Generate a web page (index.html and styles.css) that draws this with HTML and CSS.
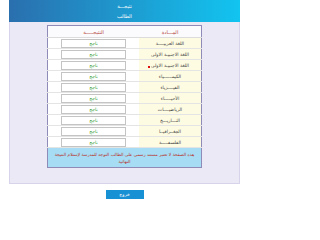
FILE: index.html
```html
<!DOCTYPE html>
<html lang="ar">
<head>
<meta charset="utf-8">
<link rel="stylesheet" href="styles.css">
</head>
<body>
<div class="page" dir="rtl">
  <div class="banner">
    <div>نتيجـــة</div>
    <div>الطالب</div>
  </div>
  <div class="panel">
    <table class="results">
      <tr class="head"><th class="subj">المـــادة</th><th class="res">النتيجـــــة</th></tr>
      <tr><td class="subj">اللغة العربيــــة</td><td class="res"><span class="box">ناجح</span></td></tr>
      <tr><td class="subj">اللغة الاجنبيـة الاولى</td><td class="res"><span class="box">ناجح</span></td></tr>
      <tr><td class="subj">اللغة الاجنبيـة الاولى<span class="dot"></span></td><td class="res"><span class="box">ناجح</span></td></tr>
      <tr><td class="subj">الكيمــــــياء</td><td class="res"><span class="box">ناجح</span></td></tr>
      <tr><td class="subj">الفيــــزياء</td><td class="res"><span class="box">ناجح</span></td></tr>
      <tr><td class="subj">الأحيـــــاء</td><td class="res"><span class="box">ناجح</span></td></tr>
      <tr><td class="subj">الرياضيــــات</td><td class="res"><span class="box">ناجح</span></td></tr>
      <tr><td class="subj">التـــاريـــخ</td><td class="res"><span class="box">ناجح</span></td></tr>
      <tr><td class="subj">الجغــرافيــا</td><td class="res"><span class="box">ناجح</span></td></tr>
      <tr><td class="subj">الفلسفـــــة</td><td class="res"><span class="box">ناجح</span></td></tr>
      <tr class="note"><td colspan="2">هذه الصفحة لا تعتبر مستند رسمي على الطالب التوجه للمدرسة لإستلام النتيجة النهائية</td></tr>
    </table>
  </div>
  <div class="actions"><span class="btn">خروج</span></div>
</div>
</body>
</html>
```
FILE: styles.css
```css
html, body {
  margin: 0;
  padding: 0;
  background: #ffffff;
}
.page {
  width: 231px;
  margin: 0 8px 0 9px;
  font-family: "DejaVu Sans", sans-serif;
}
.banner {
  height: 22px;
  background: linear-gradient(to left, #12c4f0, #2a6fae);
  color: #ffffff;
  font-size: 5px;
  line-height: 10px;
  text-align: center;
  padding-top: 1px;
  box-sizing: border-box;
}
.panel {
  background: #ebe9f6;
  border: 1px solid #d6d3ea;
  border-top: none;
  height: 162px;
  box-sizing: border-box;
  padding-top: 3px;
}
.results {
  width: 155px;
  margin: 0 auto;
  border-collapse: collapse;
  border: 1px solid #8e8bb8;
  background: #ffffff;
  font-size: 4.6px;
}
.results th, .results td {
  padding: 0;
  text-align: center;
}
.head th {
  height: 11px;
  color: #b5443a;
  font-weight: normal;
  font-size: 5px;
  background: #fbfbfe;
  border-bottom: 1px solid #dcdcdc;
}
.results td {
  height: 10px;
  border-bottom: 1px solid #e4e4e4;
}
td.subj {
  width: 62px;
  background: #fdfbe2;
  color: #444444;
  position: relative;
}
th.subj {
  width: 62px;
}
.box {
  display: block;
  width: 63px;
  height: 7px;
  margin: 0 auto;
  border: 1px solid #c4c4c4;
  color: #2e9a2e;
  line-height: 7px;
  font-size: 4.6px;
  background: #ffffff;
}
.dot {
  position: absolute;
  left: 9px;
  top: 6px;
  width: 2px;
  height: 2px;
  background: #e01010;
}
.note td {
  height: 17px;
  background: #a6dcf4;
  color: #b83228;
  font-size: 4.3px;
  line-height: 7px;
  padding: 1px 1px;
  border-bottom: none;
}
.actions {
  display: flex;
  justify-content: center;
  padding-top: 6px;
}
.btn {
  display: block;
  width: 38px;
  height: 9px;
  background: #1890d4;
  color: #ffffff;
  font-size: 4.5px;
  line-height: 9px;
  text-align: center;
}
```
